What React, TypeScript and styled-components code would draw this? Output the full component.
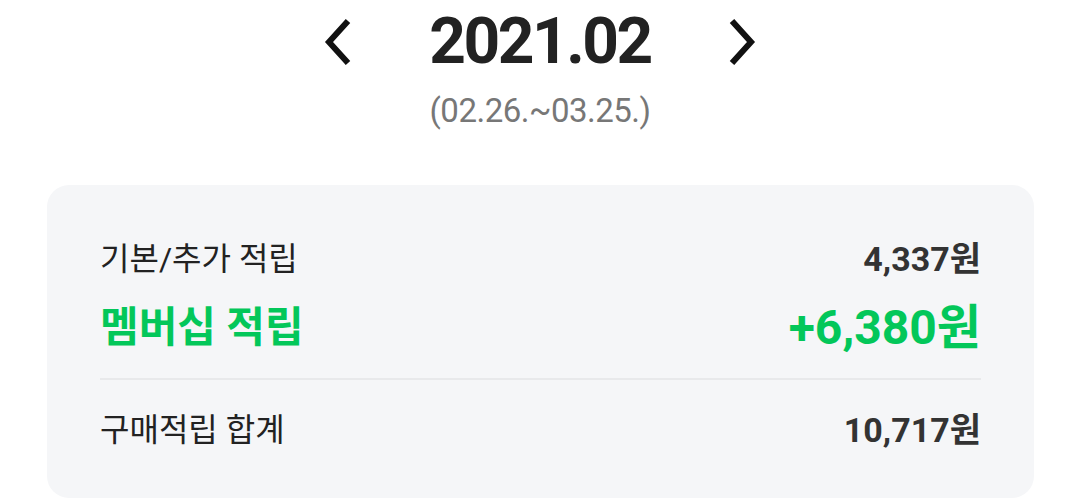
import React from "react";
import styled, { createGlobalStyle } from "styled-components";

const Global = createGlobalStyle`
  html, body { margin: 0; padding: 0; background: #ffffff; }
  body { font-family: Roboto, "Noto Sans CJK KR", sans-serif; }
`;

const Page = styled.div`
  width: 1080px;
  height: 504px;
  overflow: hidden;
  display: flex;
  flex-direction: column;
  align-items: center;
`;

const Header = styled.div`
  display: flex;
  flex-direction: column;
  align-items: center;
  padding-top: 4px;
`;

const MonthRow = styled.div`
  display: flex;
  align-items: center;
  gap: 78px;
`;

const NavButton = styled.button`
  border: 0;
  background: none;
  padding: 0;
  width: 28px;
  height: 46px;
  display: flex;
  align-items: center;
  justify-content: center;
  cursor: pointer;
`;

const Month = styled.div`
  font-size: 64px;
  font-weight: 700;
  color: #222222;
  line-height: 76px;
  letter-spacing: -2.5px;
`;

const Range = styled.div`
  font-size: 33px;
  color: #777777;
  line-height: 40px;
  margin-top: 11px;
  letter-spacing: -0.5px;
`;

const Card = styled.div`
  align-self: stretch;
  margin: 54px 46px 0 47px;
  background: #f5f6f8;
  border-radius: 22px;
  padding: 52px 53px 46px 53px;
  display: flex;
  flex-direction: column;
`;

const Row = styled.div<{ $gap?: number; $accent?: boolean }>`
  display: flex;
  justify-content: space-between;
  align-items: center;
  height: ${(p) => (p.$accent ? 56 : 44)}px;
  margin-top: ${(p) => p.$gap ?? 0}px;
`;

const Label = styled.span<{ $accent?: boolean }>`
  font-size: ${(p) => (p.$accent ? 42 : 32)}px;
  font-weight: ${(p) => (p.$accent ? 700 : 400)};
  color: ${(p) => (p.$accent ? "#03c75a" : "#222222")};
  line-height: 1;
`;

const Amount = styled.span<{ $accent?: boolean }>`
  font-size: ${(p) => (p.$accent ? 48 : 34)}px;
  font-weight: 700;
  color: ${(p) => (p.$accent ? "#03c75a" : "#333333")};
  line-height: 1;
`;

const Divider = styled.div`
  height: 2px;
  background: #e8e9eb;
  margin: 22px 0 28px;
`;

const Chevron = ({ dir }: { dir: "left" | "right" }) => (
  <svg width="28" height="46" viewBox="0 0 28 46">
    <path
      d={dir === "left" ? "M25 2 L6 23 L25 44" : "M3 2 L22 23 L3 44"}
      fill="none"
      stroke="#111"
      strokeWidth="6"
      strokeLinecap="butt"
      strokeLinejoin="miter"
    />
  </svg>
);

export default function App() {
  return (
    <>
      <Global />
      <Page>
        <Header>
          <MonthRow>
            <NavButton aria-label="이전 달">
              <Chevron dir="left" />
            </NavButton>
            <Month>2021.02</Month>
            <NavButton aria-label="다음 달">
              <Chevron dir="right" />
            </NavButton>
          </MonthRow>
          <Range>(02.26.~03.25.)</Range>
        </Header>
        <Card>
          <Row>
            <Label>기본/추가 적립</Label>
            <Amount>4,337원</Amount>
          </Row>
          <Row $gap={19} $accent>
            <Label $accent>멤버십 적립</Label>
            <Amount $accent>+6,380원</Amount>
          </Row>
          <Divider />
          <Row>
            <Label>구매적립 합계</Label>
            <Amount>10,717원</Amount>
          </Row>
        </Card>
      </Page>
    </>
  );
}
